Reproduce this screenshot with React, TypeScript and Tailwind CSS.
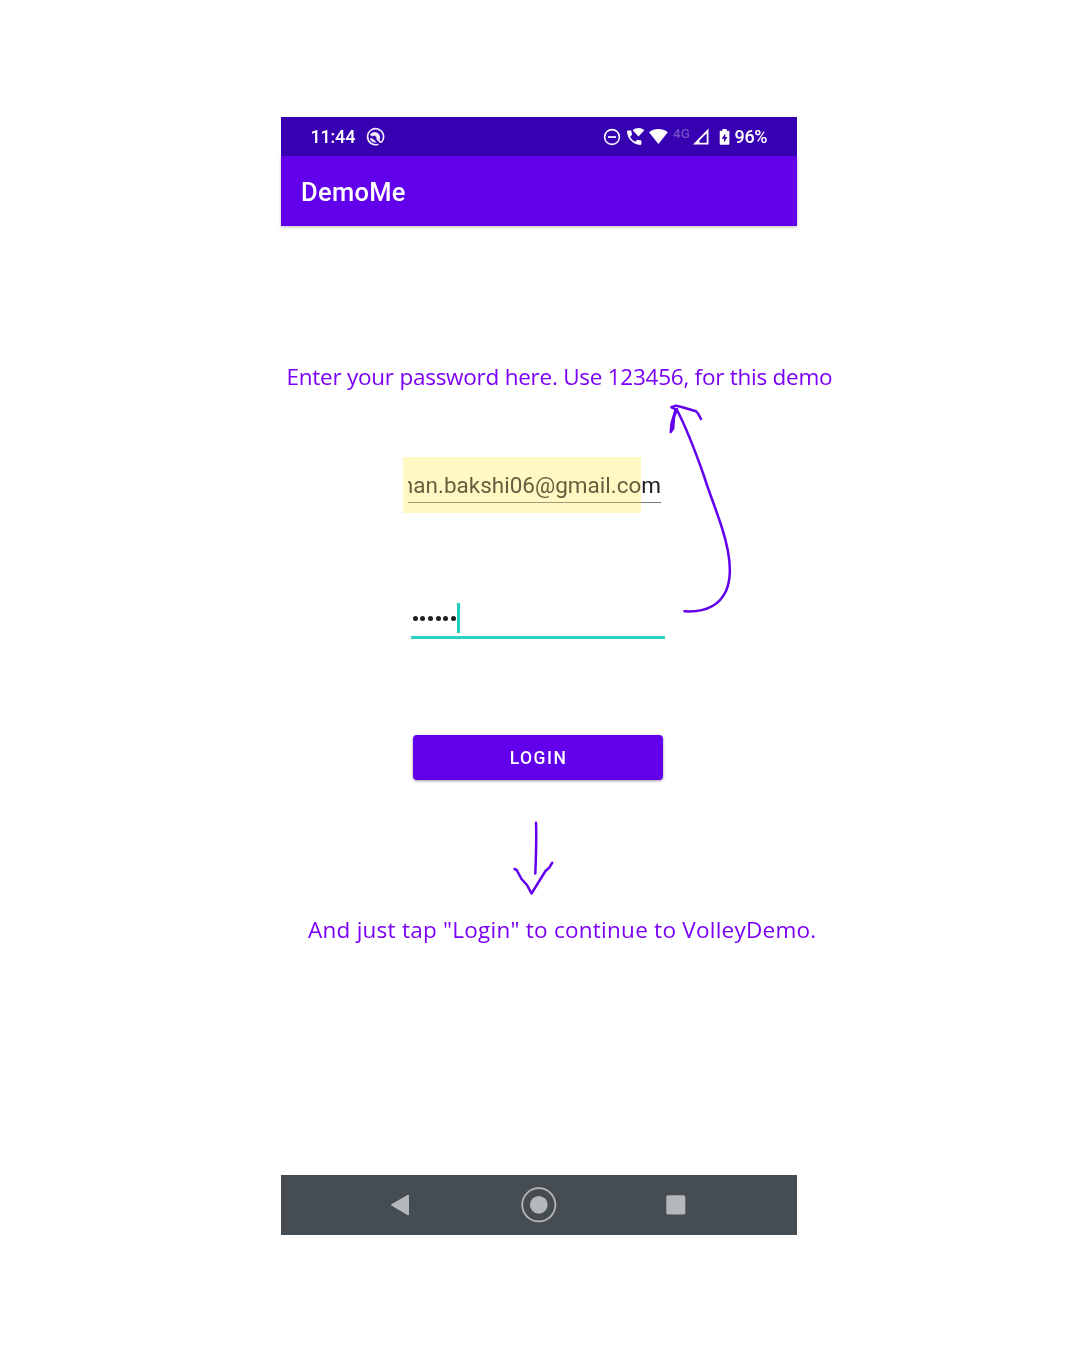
import React from "react";

function StatusBar() {
  return (
    <div className="flex h-[39px] items-center bg-[#3700b1] pl-[29.5px] pt-px text-white">
      <span className="w-[54.5px] text-[18px] font-medium leading-none tracking-[-0.2px]">11:44</span>
      <svg className="h-[20px] w-[20px]" viewBox="365 127 20 20" fill="none" stroke="#f1ebfc">
        <path d="M381 142.6A8 8 0 1 0 378.4 144.2" strokeWidth="1.7" />
        <path d="M369.8 134.8A5.5 5.5 0 1 1 379.4 140.4L374.6 135.6L372.4 136.6Z" fill="#f1ebfc" stroke="none" />
        <path d="M369.8 138.2L372.2 138.2L376.6 142.2A5.4 5.4 0 0 1 369.8 138.2Z" fill="#f1ebfc" stroke="none" />
        <path d="M376.5 138.3L380.8 142.6" stroke="#f1ebfc" strokeWidth="1.6" />
      </svg>
      <svg className="ml-[218px] h-[20px] w-[131px]" viewBox="603 127 131 20" fill="#fff">
        <circle cx="612" cy="137" r="7.4" fill="none" stroke="#fff" strokeWidth="1.6" />
        <path d="M608 136.2h8v1.7h-8z" />
        <path d="M628 130.6h3.2l.9 4.1-2 2.1c1.2 2.3 2.8 3.8 5.1 4.9l2.1-2 4.1.9v3.2c0 .7-.5 1.1-1.2 1.1-6.9-.3-12.8-6-13.2-13.1 0-.7.4-1.2 1-1.2Z" />
        <path d="M632.7 130.2c3.3-2.9 8.3-2.9 11.6 0l-5.8 6.3Z" stroke="#3700b1" strokeWidth="1" paintOrder="stroke" />
        <path d="M649 132.2c5.3-4.3 13.4-4.3 18.8 0L658.4 144Z" />
        <text x="673" y="138" fill="#7450cb" fontSize="13" fontWeight="500" textLength="17" lengthAdjust="spacingAndGlyphs">4G</text>
        <path d="M693 144.6L708.5 128.6V144.6ZM699.4 142.8H706.7V133.2L699.4 140.4Z" fillRule="evenodd" />
        <path d="M722.4 129h4.2v1.8h1.8c.6 0 1 .4 1 1v12c0 .6-.4 1-1 1h-7.7c-.6 0-1-.4-1-1v-12c0-.6.4-1 1-1h1.7Z" />
        <path d="M725.3 133.2L721.8 138.7H724V142.4L727.4 136.9H725.3Z" fill="#3700b1" />
      </svg>
      <span className="pl-[0.5px] text-[18px] font-medium leading-none tracking-[-0.3px]">96%</span>
    </div>
  );
}

function NavigationBar() {
  return (
    <div className="h-[60px] bg-[#454d52]">
      <svg className="block h-full w-full" viewBox="0 0 516 60" fill="#b4b8ba">
        <path d="M110.7 29.1L126.5 20Q128 19.3 128 21V39Q128 40.7 126.5 40L110.7 30.8Q109.4 30 110.7 29.1Z" />
        <circle cx="257.8" cy="29.8" r="16.6" fill="none" stroke="#b4b8ba" strokeWidth="1.8" />
        <circle cx="257.8" cy="29.8" r="8.9" />
        <rect x="385.3" y="20.2" width="19" height="19.3" rx="1.7" />
      </svg>
    </div>
  );
}

export default function App() {
  return (
    <div className="h-[1350px] w-[1080px] bg-white pl-[281px] pt-[117px] font-['Roboto',sans-serif]">
      <div className="relative flex h-[1118px] w-[516px] flex-col">
        <StatusBar />
        <header className="flex h-[70px] items-center bg-[#6200eb] pl-5 pt-[3px] text-[25.5px] font-medium tracking-[0.3px] text-white shadow-[0_1px_3px_rgba(0,0,0,0.25)]">
          DemoMe
        </header>
        <main className="flex flex-1 flex-col">
          <p className="ml-[5.5px] mt-[134px] h-[34px] whitespace-nowrap font-['Open_Sans',sans-serif] text-[22.5px] leading-[34px] tracking-[-0.25px] text-[#7b00f5]">
            Enter your password here. Use 123456, for this demo
          </p>
          <div className="relative ml-[127px] mt-[63px] h-[56px] w-[253px]">
            <div className="flex h-[46px] items-center justify-end overflow-hidden whitespace-nowrap border-b border-[#77777c] pt-[12px] text-[22.5px] text-[#202024]">
              man.bakshi06@gmail.com
            </div>
            <div className="absolute -left-[5px] top-0 h-[56px] w-[238px] bg-[#fff59d]/30" />
            <div className="absolute -left-[5px] top-0 h-[56px] w-[238px] bg-[#fffbdc] mix-blend-multiply" />
          </div>
          <div className="ml-[130px] mt-[90px] flex h-[36px] w-[254px] items-start border-b-[3px] border-[#2bd3c0]">
            <div className="flex w-[46px] gap-[2.67px] pl-[1.6px] pt-[13.2px]">
              {[0, 1, 2, 3, 4, 5].map((n) => (
                <i key={n} className="h-[5px] w-[5px] shrink-0 rounded-full bg-[#202020]" />
              ))}
            </div>
            <div className="h-[30px] w-[2.5px] bg-[#1dcfbb]" />
          </div>
          <button className="ml-[132px] mt-[96px] h-[45px] w-[250px] rounded-[4px] bg-[#6200eb] pl-px pt-0.5 text-[17.5px] font-medium tracking-[1.5px] text-white shadow-[0_1px_3px_rgba(0,0,0,0.4)]">
            LOGIN
          </button>
          <p className="ml-[27px] mt-[133px] h-[34px] whitespace-nowrap font-['Open_Sans',sans-serif] text-[22.5px] leading-[34px] tracking-[0.25px] text-[#7b00f5]">
            And just tap "Login" to continue to VolleyDemo.
          </p>
        </main>
        <NavigationBar />
        <svg
          className="pointer-events-none absolute left-[379px] top-[278px] h-[230px] w-[90px]"
          viewBox="660 395 90 230"
          fill="none"
          stroke="#6200ee"
          strokeWidth="2.5"
          strokeLinecap="round"
          strokeLinejoin="round"
        >
          <path d="M684.5 611.3C705 612.5 719 606 726 591C733 575 730 553 722 528C716 509 710 495 704 476C697 456 688 431 676.5 409" />
          <path d="M671.3 407.2L676 405.6L682.5 407.2L696 411.2L698.2 413.8L701 419" />
          <path d="M672 407.5L675.6 409.5L671.6 423L670.7 432L673.2 428.5L674 417L677 409" />
        </svg>
        <svg
          className="pointer-events-none absolute left-[209px] top-[693px] h-[95px] w-[90px]"
          viewBox="490 810 90 95"
          fill="none"
          stroke="#6200ee"
          strokeWidth="2.5"
          strokeLinecap="round"
          strokeLinejoin="round"
        >
          <path d="M536 822.7C536.7 840 536 856 535.3 873.5" />
          <path d="M514.5 869L516.7 870L521.5 879L527 885L531.5 893.5L545.5 871L549.5 867.3L552.3 862.7" />
        </svg>
      </div>
    </div>
  );
}
